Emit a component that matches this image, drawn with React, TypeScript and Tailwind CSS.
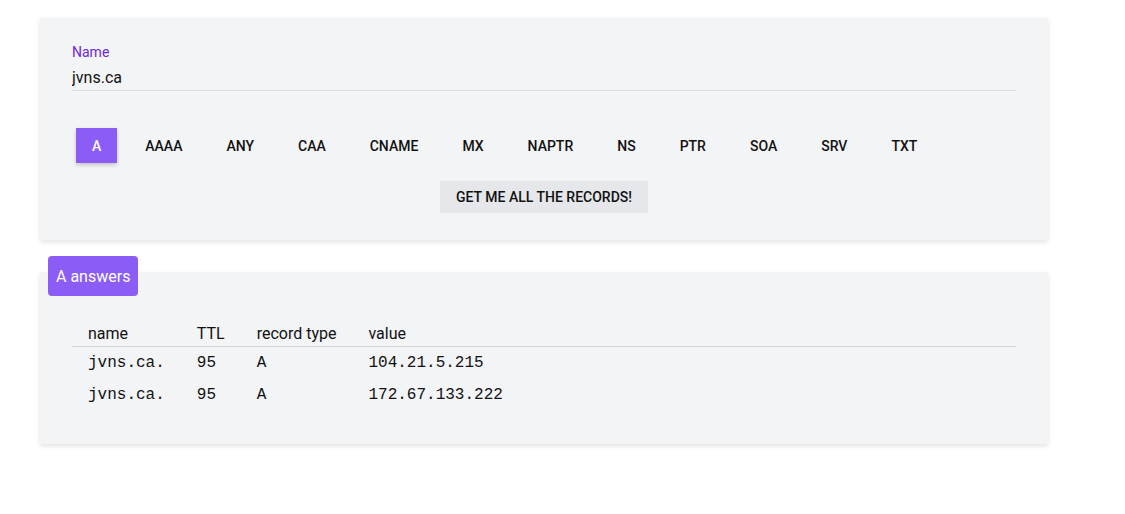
import { useState } from "react";

const TYPES = ["A", "AAAA", "ANY", "CAA", "CNAME", "MX", "NAPTR", "NS", "PTR", "SOA", "SRV", "TXT"];

const rows = [
  { name: "jvns.ca.", ttl: "95", type: "A", value: "104.21.5.215" },
  { name: "jvns.ca.", ttl: "95", type: "A", value: "172.67.133.222" },
];

export default function App() {
  const [selected, setSelected] = useState("A");
  const [name, setName] = useState("jvns.ca");

  return (
    <div className="min-h-screen bg-white pt-[18px] pl-10 font-['Roboto',sans-serif] text-[#111]">
      {/* Query form */}
      <div className="w-[1008px] bg-[#f3f4f6] shadow-[0_2px_5px_rgba(0,0,0,0.12)] px-8 pt-6 pb-[27px]">
        <label className="block text-sm leading-5 text-[#6d28d9]">Name</label>
        <input
          value={name}
          onChange={(e) => setName(e.target.value)}
          className="block w-full bg-transparent border-b border-[#dcdde0] text-base leading-6 pt-1 pb-0 outline-none"
        />

        <div className="flex gap-3 pl-1 mt-[37px]">
          {TYPES.map((t) => (
            <button
              key={t}
              onClick={() => setSelected(t)}
              className={
                t === selected
                  ? "h-[35px] px-4 text-sm font-medium bg-[#8b5cf6] text-white shadow-[0_2px_4px_rgba(0,0,0,0.2)]"
                  : "h-[35px] px-4 text-sm font-medium text-[#111]"
              }
            >
              {t}
            </button>
          ))}
        </div>

        <div className="flex justify-center mt-[18px]">
          <button className="h-8 px-4 bg-[#e5e7eb] text-sm font-medium">
            GET ME ALL THE RECORDS!
          </button>
        </div>
      </div>

      {/* Answers */}
      <div className="relative w-[1008px] mt-8">
        <div className="absolute -top-4 left-2 bg-[#8b5cf6] text-white text-base leading-6 px-2 pt-[9px] pb-[7px] rounded">
          {selected} answers
        </div>
        <div className="bg-[#f3f4f6] shadow-[0_2px_5px_rgba(0,0,0,0.12)] px-8 pt-12 pb-[33px]">
          <table className="w-full text-left border-collapse">
            <thead>
              <tr className="border-b border-[#d4d5d8]">
                <th className="w-px whitespace-nowrap px-4 pt-[2px] pb-0 font-normal text-base leading-6">name</th>
                <th className="w-px whitespace-nowrap px-4 pt-[2px] pb-0 font-normal text-base leading-6">TTL</th>
                <th className="w-px whitespace-nowrap px-4 pt-[2px] pb-0 font-normal text-base leading-6">record type</th>
                <th className="px-4 pt-[2px] pb-0 font-normal text-base leading-6">value</th>
              </tr>
            </thead>
            <tbody className="font-['Liberation_Mono',monospace]">
              {rows.map((r, i) => (
                <tr key={i}>
                  <td className="whitespace-nowrap px-4 py-1 text-base leading-6">{r.name}</td>
                  <td className="whitespace-nowrap px-4 py-1 text-base leading-6">{r.ttl}</td>
                  <td className="whitespace-nowrap px-4 py-1 text-base leading-6">{r.type}</td>
                  <td className="px-4 py-1 text-base leading-6">{r.value}</td>
                </tr>
              ))}
            </tbody>
          </table>
        </div>
      </div>
    </div>
  );
}
